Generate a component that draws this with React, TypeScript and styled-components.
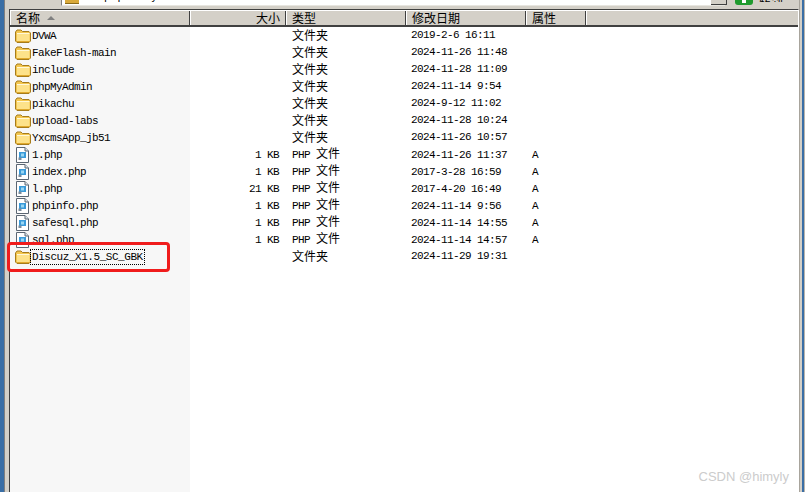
import React from "react";
import styled, { createGlobalStyle } from "styled-components";

const Global = createGlobalStyle`
  html, body { margin: 0; padding: 0; background: #fff; }
  #root { width: 805px; height: 492px; overflow: hidden; }
`;

const Desktop = styled.div`
  width: 805px;
  height: 492px;
  display: flex;
  background: #3a6ea5;
  overflow: hidden;
  font-family: "Liberation Mono", "Noto Sans CJK SC", monospace;
  font-size: 11px;
  letter-spacing: -0.6px;
  color: #000;
`;

const Win = styled.div`
  flex: 1;
  min-width: 0;
  margin-left: 4px;
  display: flex;
  flex-direction: column;
  background: #d4d0c8;
  border-left: 1px solid #808080;
  padding-left: 4px;
`;

const AddressRow = styled.div`
  height: 9px;
  display: flex;
  align-items: flex-start;
  flex: none;
  overflow: hidden;
`;

const AddressField = styled.div`
  margin-left: 52px;
  width: 660px;
  height: 5px;
  background: #fff;
  border-left: 1px solid #808080;
  border-bottom: 1px solid #e8e6e0;
  overflow: hidden;
  display: flex;
  align-items: flex-start;
  gap: 5px;
  padding-left: 3px;
`;

const AddressIcon = styled.span`
  width: 14px;
  height: 3px;
  background: #d9a93a;
  border-bottom: 1px solid #8a6a1a;
`;

const AddressText = styled.span`
  line-height: 12px;
  height: 12px;
  margin-top: -9px;
  white-space: nowrap;
  letter-spacing: 0.1px;
`;

const FieldButton = styled.div`
  margin-left: -14px;
  width: 15px;
  height: 4px;
  background: #d4d0c8;
  border-right: 1px solid #404040;
  border-bottom: 1px solid #404040;
`;

const GoIcon = styled.div`
  margin-left: 8px;
  width: 18px;
  height: 5px;
  background: #1f9a2e;
  border-radius: 0 0 3px 3px;
  display: flex;
  justify-content: center;
`;

const GoArrow = styled.span`
  width: 4px;
  height: 3px;
  background: #fff;
`;

const GoLabel = styled.div`
  margin-left: 6px;
  height: 2px;
  line-height: 2px;
  font-family: "Noto Sans CJK SC", sans-serif;
  font-size: 12px;
  letter-spacing: 0;
  overflow: hidden;
  width: 28px;
`;

const ListArea = styled.div`
  flex: 1;
  background: #fff;
  border-left: 1px solid #404040;
  border-top: 1px solid #404040;
  border-right: 1px solid #fff;
  position: relative;
  display: flex;
  flex-direction: column;
  min-height: 0;
`;

const HeaderRow = styled.div`
  display: grid;
  grid-template-columns: 180px 96px 120px 120px 60px 1fr;
  height: 14px;
  background: #d4d0c8;
  border-top: 1px solid #fff;
  border-bottom: 2px solid #404040;
  flex: none;
`;

const HeaderCell = styled.div<{ $right?: boolean; $last?: boolean }>`
  border-left: 1px solid #fff;
  border-right: ${(p) => (p.$last ? "none" : "1px solid #404040")};
  font-family: "Noto Sans CJK SC", sans-serif;
  font-size: 12px;
  letter-spacing: 0;
  line-height: 14px;
  padding: 0 5px;
  white-space: nowrap;
  display: flex;
  align-items: center;
  gap: 7px;
  justify-content: ${(p) => (p.$right ? "flex-end" : "flex-start")};
`;

const SortArrow = styled.span`
  width: 0;
  height: 0;
  border-left: 4px solid transparent;
  border-right: 4px solid transparent;
  border-bottom: 4px solid #808080;
`;

const Rows = styled.div`
  flex: 1;
  min-height: 0;
  background: linear-gradient(90deg, #f7f7f7 0, #f7f7f7 180px, #fff 180px);
`;

const Row = styled.div`
  display: grid;
  grid-template-columns: 180px 96px 120px 120px 60px 1fr;
  height: 17px;
  align-items: center;
  line-height: 17px;
  white-space: nowrap;
`;

const NameCell = styled.div`
  display: flex;
  align-items: center;
  padding-left: 5px;
`;

const NameText = styled.span<{ $focus?: boolean }>`
  padding: 0 1px;
  outline: ${(p) => (p.$focus ? "1px dotted #000" : "none")};
  letter-spacing: ${(p) => (p.$focus ? "-0.45px" : "-0.6px")};
  line-height: 14px;
  height: 14px;
`;

const SizeCell = styled.div`
  text-align: right;
  padding-right: 7px;
`;

const TypeCell = styled.div`
  font-family: "Noto Sans CJK SC", sans-serif;
  font-size: 12px;
  letter-spacing: 0;
  padding-left: 6px;
  margin-top: -2px;
`;

const TypeLatin = styled.span`
  font-family: "Liberation Mono", monospace;
  font-size: 11px;
  letter-spacing: -0.6px;
  white-space: pre;
`;

const DateCell = styled.div`
  padding-left: 5px;
`;

const AttrCell = styled.div`
  padding-left: 6px;
`;

const Callout = styled.div`
  position: absolute;
  left: -3px;
  top: 232px;
  width: 163px;
  height: 30px;
  box-sizing: border-box;
  border: 3px solid #f01c1c;
  border-radius: 4px;
  pointer-events: none;
`;

const Watermark = styled.div`
  position: absolute;
  right: 9px;
  bottom: 8px;
  font-family: "Liberation Sans", sans-serif;
  font-size: 13px;
  letter-spacing: 0;
  color: #cccccc;
`;

const WinEdge = styled.div`
  width: 3px;
  box-sizing: border-box;
  flex: none;
  background: #d4d0c8;
  border-left: 1px solid #a8a49c;
`;

const OuterEdge = styled.div`
  width: 1px;
  margin-left: 2px;
  flex: none;
  background: #b8b4ac;
`;

const Folder = () => (
  <svg width="16" height="14" viewBox="0 0 16 14">
    <path d="M.5 3 L2 1 H6 L7.5 2.5 H14 L15.5 4 V12 L14 13.5 H2 L.5 12 Z" fill="#f3c64e" stroke="#a67c1c" />
    <path d="M2 5 H14.5 V12 H2 Z" fill="#fde28a" />
    <path d="M2 4.5 H14.5" stroke="#fff8d8" />
    <path d="M2 12.5 H14.5" stroke="#e0a92c" />
  </svg>
);

const PhpFile = () => (
  <svg width="16" height="16" viewBox="0 0 16 16">
    <path d="M1.5 .5 H10 L13.5 4 V15.5 H1.5 Z" fill="#fff" stroke="#5b6673" />
    <path d="M10 .5 V4 H13.5" fill="#dde4ea" stroke="#5b6673" />
    <rect x="4" y="5" width="7" height="6" fill="#3a9ad9" />
    <rect x="6" y="6.5" width="3" height="3" fill="#9ad6f2" />
    <rect x="3.5" y="10.5" width="3" height="2.5" fill="#7a8a9a" />
  </svg>
);

type Item = { name: string; size?: string; type: string; date: string; attr?: string; folder?: boolean; focus?: boolean };

const items: Item[] = [
  { name: "DVWA", type: "文件夹", date: "2019-2-6 16:11", folder: true },
  { name: "FakeFlash-main", type: "文件夹", date: "2024-11-26 11:48", folder: true },
  { name: "include", type: "文件夹", date: "2024-11-28 11:09", folder: true },
  { name: "phpMyAdmin", type: "文件夹", date: "2024-11-14 9:54", folder: true },
  { name: "pikachu", type: "文件夹", date: "2024-9-12 11:02", folder: true },
  { name: "upload-labs", type: "文件夹", date: "2024-11-28 10:24", folder: true },
  { name: "YxcmsApp_jb51", type: "文件夹", date: "2024-11-26 10:57", folder: true },
  { name: "1.php", size: "1 KB", type: "文件", date: "2024-11-26 11:37", attr: "A" },
  { name: "index.php", size: "1 KB", type: "文件", date: "2017-3-28 16:59", attr: "A" },
  { name: "l.php", size: "21 KB", type: "文件", date: "2017-4-20 16:49", attr: "A" },
  { name: "phpinfo.php", size: "1 KB", type: "文件", date: "2024-11-14 9:56", attr: "A" },
  { name: "safesql.php", size: "1 KB", type: "文件", date: "2024-11-14 14:55", attr: "A" },
  { name: "sql.php", size: "1 KB", type: "文件", date: "2024-11-14 14:57", attr: "A" },
  { name: "Discuz_X1.5_SC_GBK", type: "文件夹", date: "2024-11-29 19:31", folder: true, focus: true },
];

export default function App() {
  return (
    <Desktop>
      <Global />
      <Win>
        <AddressRow>
          <AddressField>
            <AddressIcon />
            <AddressText>D:\phpStudy\WWW</AddressText>
          </AddressField>
          <FieldButton />
          <GoIcon>
            <GoArrow />
          </GoIcon>
          <GoLabel>转到</GoLabel>
        </AddressRow>
        <ListArea>
          <HeaderRow>
            <HeaderCell>
              名称 <SortArrow />
            </HeaderCell>
            <HeaderCell $right>大小</HeaderCell>
            <HeaderCell>类型</HeaderCell>
            <HeaderCell>修改日期</HeaderCell>
            <HeaderCell>属性</HeaderCell>
            <HeaderCell $last />
          </HeaderRow>
          <Rows>
            {items.map((it) => (
              <Row key={it.name}>
                <NameCell>
                  {it.folder ? <Folder /> : <PhpFile />}
                  <NameText $focus={it.focus}>{it.name}</NameText>
                </NameCell>
                <SizeCell>{it.size}</SizeCell>
                <TypeCell>
                  {!it.folder && <TypeLatin>PHP </TypeLatin>}
                  {it.type}
                </TypeCell>
                <DateCell>{it.date}</DateCell>
                <AttrCell>{it.attr}</AttrCell>
              </Row>
            ))}
          </Rows>
          <Callout />
          <Watermark>CSDN @himyly</Watermark>
        </ListArea>
      </Win>
      <WinEdge />
      <OuterEdge />
    </Desktop>
  );
}
